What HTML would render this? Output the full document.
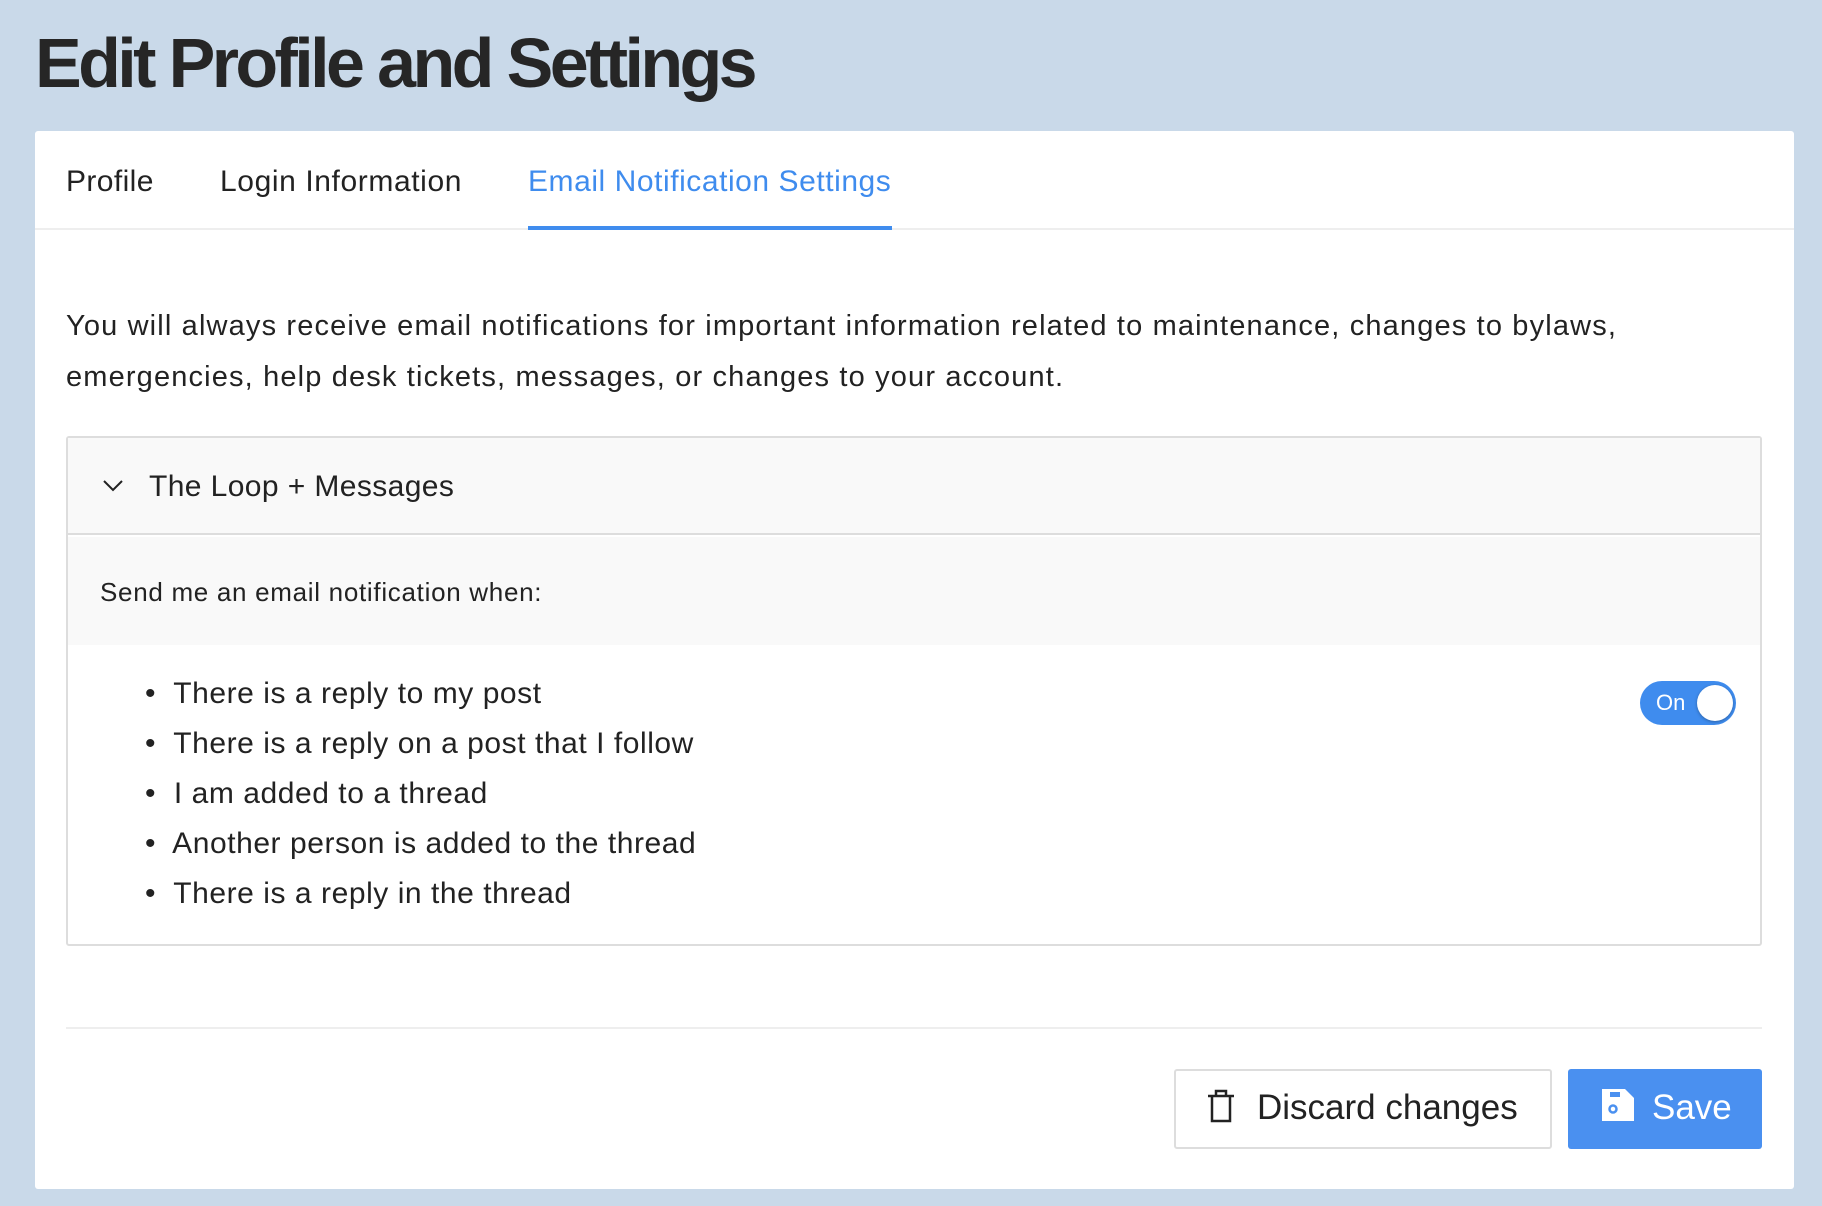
<!DOCTYPE html>
<html><head><meta charset="utf-8"><style>
*{margin:0;padding:0;box-sizing:border-box}
body{width:1822px;height:1206px;background:#c9d9e9;font-family:"Liberation Sans",sans-serif;color:#222;position:relative;overflow:hidden}
.a{position:absolute;white-space:nowrap}
</style></head><body>
<div class="a" style="left:35px;top:28px;font-size:70px;line-height:70px;font-weight:bold;color:#262626;letter-spacing:-3.6px">Edit Profile and Settings</div>
<div class="a" style="left:35px;top:131px;width:1759px;height:1058px;background:#fff;border-radius:3px"></div>
<div class="a" style="left:35px;top:228px;width:1759px;height:2px;background:#eee"></div>
<div class="a" style="left:66px;top:167px;font-size:30px;line-height:30px;letter-spacing:0.4px">Profile</div>
<div class="a" style="left:220px;top:167px;font-size:30px;line-height:30px;letter-spacing:0.6px">Login Information</div>
<div class="a" style="left:528px;top:167px;font-size:30px;line-height:30px;color:#3f8cee;letter-spacing:0.55px">Email Notification Settings</div>
<div class="a" style="left:528px;top:226px;width:364px;height:4px;background:#3f8cee"></div>
<div class="a" style="left:66px;top:301px;font-size:29px;line-height:51px;letter-spacing:1.15px">You will always receive email notifications for important information related to maintenance, changes to bylaws,<br>emergencies, help desk tickets, messages, or changes to your account.</div>
<div class="a" style="left:66px;top:436px;width:1696px;height:510px;border:2px solid #ddd;border-radius:3px;background:#fff"></div>
<div class="a" style="left:68px;top:438px;width:1692px;height:97px;background:#f9f9f9;border-bottom:2px solid #ddd"></div>
<div class="a" style="left:68px;top:537px;width:1692px;height:108px;background:#f9f9f9"></div>
<svg class="a" style="left:102px;top:478px" width="22" height="16" viewBox="0 0 22 16"><path d="M2 3 L11 12 L20 3" fill="none" stroke="#222" stroke-width="2"/></svg>
<div class="a" style="left:149px;top:472px;font-size:30px;line-height:30px;letter-spacing:0.4px">The Loop + Messages</div>
<div class="a" style="left:100px;top:579px;font-size:26px;line-height:26px;letter-spacing:0.7px">Send me an email notification when:</div>
<div class="a" style="left:145px;top:669px;font-size:30px;line-height:50px;letter-spacing:0.55px">
<div>•&nbsp; There is a reply to my post</div>
<div>•&nbsp; There is a reply on a post that I follow</div>
<div>•&nbsp; I am added to a thread</div>
<div>•&nbsp; Another person is added to the thread</div>
<div>•&nbsp; There is a reply in the thread</div>
</div>
<div class="a" style="left:1640px;top:681px;width:96px;height:44px;border-radius:22px;background:#3f8cee"></div>
<div class="a" style="left:1656px;top:692px;font-size:22px;line-height:22px;color:#fff">On</div>
<div class="a" style="left:1697px;top:685px;width:36px;height:36px;border-radius:50%;background:#fff;box-shadow:0 1px 3px rgba(0,0,0,.3)"></div>
<div class="a" style="left:66px;top:1027px;width:1696px;height:2px;background:#eee"></div>
<div class="a" style="left:1174px;top:1069px;width:378px;height:80px;border:2px solid #ddd;border-radius:3px;background:#fff"></div>
<svg class="a" style="left:1206px;top:1088px" width="30" height="36" viewBox="0 0 30 36"><path d="M2 8 H28 M10 8 V3 H20 V8 M6 8 V33 H24 V8" fill="none" stroke="#222" stroke-width="2.5"/></svg>
<div class="a" style="left:1257px;top:1090px;font-size:35px;line-height:35px">Discard changes</div>
<div class="a" style="left:1568px;top:1069px;width:194px;height:80px;border-radius:3px;background:#4a90f0"></div>
<svg class="a" style="left:1601px;top:1088px" width="34" height="34" viewBox="0 0 34 34"><path d="M1 1 H24 L33 10 V33 H1 Z" fill="#fff"/><rect x="9" y="4" width="10" height="5" fill="#4a90f0"/><circle cx="12" cy="21" r="3.5" fill="none" stroke="#4a90f0" stroke-width="2.5"/></svg>
<div class="a" style="left:1652px;top:1090px;font-size:35px;line-height:35px;color:#fff">Save</div>
</body></html>
